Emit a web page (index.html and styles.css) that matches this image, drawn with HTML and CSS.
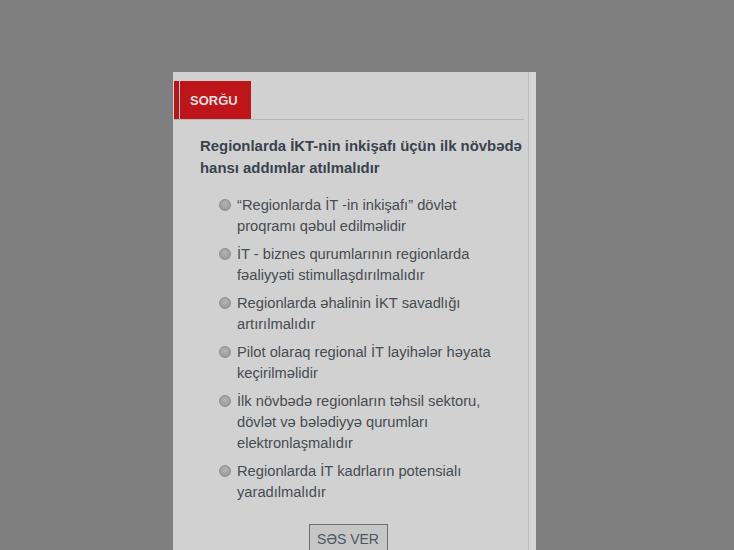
FILE: index.html
```html
<!DOCTYPE html>
<html lang="az">
<head>
<meta charset="utf-8">
<link rel="stylesheet" href="styles.css">
</head>
<body>
<div class="panel">
  <div class="main">
    <div class="head">
      <div class="tag"><span class="stripe"></span><span class="title">SORĞU</span></div>
    </div>
    <div class="question">Regionlarda İKT-nin inkişafı üçün ilk növbədə hansı addımlar atılmalıdır</div>
    <ul class="options">
      <li><span class="radio"></span><span class="label">“Regionlarda İT -in inkişafı” dövlət proqramı qəbul edilməlidir</span></li>
      <li><span class="radio"></span><span class="label">İT - biznes qurumlarının regionlarda fəaliyyəti stimullaşdırılmalıdır</span></li>
      <li><span class="radio"></span><span class="label">Regionlarda əhalinin İKT savadlığı artırılmalıdır</span></li>
      <li><span class="radio"></span><span class="label">Pilot olaraq regional İT layihələr həyata keçirilməlidir</span></li>
      <li><span class="radio"></span><span class="label">İlk növbədə regionların təhsil sektoru, dövlət və bələdiyyə qurumları elektronlaşmalıdır</span></li>
      <li><span class="radio"></span><span class="label">Regionlarda İT kadrların potensialı yaradılmalıdır</span></li>
    </ul>
    <div class="actions"><button class="vote">SƏS VER</button></div>
  </div>
  <div class="strip-right"></div>
</div>
</body>
</html>
```
FILE: styles.css
```css
html, body {
  margin: 0;
  padding: 0;
  background: #7f7f7f;
  height: 100%;
  overflow: hidden;
}
body {
  font-family: "Liberation Sans", Arial, sans-serif;
}
.panel {
  margin: 72px 0 0 173px;
  width: 363px;
  height: 478px;
  background: #d1d1d1;
  display: flex;
}
.main {
  flex: 1;
  border-right: 1px solid #bcbcbc;
  padding-left: 1px;
}
.strip-right {
  width: 7px;
  background: #d5d5d5;
}
.head {
  margin-top: 9px;
  margin-right: 4px;
  border-bottom: 1px solid #b6b6b6;
}
.tag {
  display: flex;
  height: 38px;
}
.stripe {
  width: 5px;
  background: #b8151b;
  margin-right: 1px;
}
.title {
  display: flex;
  align-items: center;
  width: 61px;
  padding-left: 10px;
  background: #be151b;
  color: #f3dede;
  font-weight: bold;
  font-size: 13px;
}
.question {
  margin: 15px 4px 0 26px;
  font-size: 14.9px;
  line-height: 22px;
  font-weight: bold;
  color: #38434e;
}
.options {
  list-style: none;
  margin: 16px 0 0 44px;
  padding: 0;
  width: 278px;
}
.options li {
  display: flex;
  align-items: flex-start;
  margin-bottom: 7px;
  font-size: 14.7px;
  line-height: 21px;
  color: #474c52;
}
.radio {
  flex: none;
  width: 10px;
  height: 10px;
  margin: 4px 6px 0 1px;
  border-radius: 50%;
  border: 1px solid #8e8e8e;
  background: radial-gradient(circle at 50% 40%, #b4b4b4 0%, #9d9d9d 70%, #8a8a8a 100%);
}
.actions {
  display: flex;
  justify-content: center;
  margin-top: 21px;
  padding-right: 6px;
}
.vote {
  width: 79px;
  height: 30px;
  border: 1px solid #6f6f6f;
  background: #c6c6c6;
  color: #4e555c;
  font-family: "Liberation Sans", Arial, sans-serif;
  font-size: 14px;
  padding: 0;
}
```
